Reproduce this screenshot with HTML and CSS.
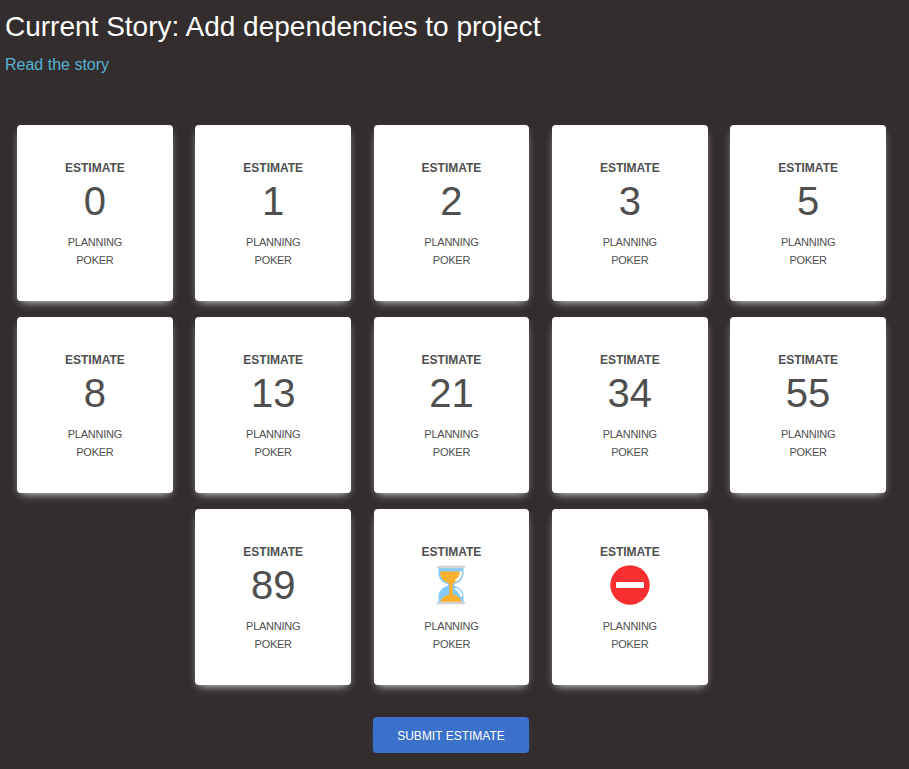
FILE: index.html
```html
<!DOCTYPE html>
<html lang="en">
<head>
<meta charset="utf-8">
<title>Planning Poker</title>
<link rel="stylesheet" href="styles.css">
</head>
<body>
<header class="story">
<h1 class="story-title">Current Story: Add dependencies to project</h1>
<a class="story-link">Read the story</a>
</header>
<main class="deck">
<div class="card"><b class="label">Estimate</b><span class="value">0</span><span class="foot">Planning<br>Poker</span></div>
<div class="card"><b class="label">Estimate</b><span class="value">1</span><span class="foot">Planning<br>Poker</span></div>
<div class="card"><b class="label">Estimate</b><span class="value">2</span><span class="foot">Planning<br>Poker</span></div>
<div class="card"><b class="label">Estimate</b><span class="value">3</span><span class="foot">Planning<br>Poker</span></div>
<div class="card"><b class="label">Estimate</b><span class="value">5</span><span class="foot">Planning<br>Poker</span></div>
<div class="card"><b class="label">Estimate</b><span class="value">8</span><span class="foot">Planning<br>Poker</span></div>
<div class="card"><b class="label">Estimate</b><span class="value">13</span><span class="foot">Planning<br>Poker</span></div>
<div class="card"><b class="label">Estimate</b><span class="value">21</span><span class="foot">Planning<br>Poker</span></div>
<div class="card"><b class="label">Estimate</b><span class="value">34</span><span class="foot">Planning<br>Poker</span></div>
<div class="card"><b class="label">Estimate</b><span class="value">55</span><span class="foot">Planning<br>Poker</span></div>
<div class="card"><b class="label">Estimate</b><span class="value">89</span><span class="foot">Planning<br>Poker</span></div>
<div class="card"><b class="label">Estimate</b><span class="value"><svg class="icon" viewBox="0 0 40 40" width="40" height="40">
<path d="M7.500 2h25v6c0 6-4 10-9.500 11.200v1.600C28.500 22 32.500 26 32.500 32v6h-25v-6c0-6 4-10 9.500-11.200v-1.600C11.500 18 7.500 14 7.500 8z" fill="#83cbff"/>
<path d="M9 6.500h22.500c0 6.500-4 10-8 11.200-1.300.4-1.800 1-1.800 2.300v9.500c3.300.5 7.800 2.500 8.800 7.500h-21c1-5 5.500-7 8.800-7.500V20c0-1.300-.5-1.900-1.800-2.300C12.500 16.500 9 13 9 6.500z" fill="#ffb02e"/>
<path d="M29.800 7.500c0 3.500-1.600 6-4.600 7.800M25.200 24c2.800 1.500 4.400 3.500 4.800 6.500" fill="none" stroke="#fff" stroke-width="2.400" stroke-linecap="round"/>
<path d="M6 .700h28v2.500H6zM6 36.700h28v2.500H6z" fill="#d3d3d3"/></svg></span><span class="foot">Planning<br>Poker</span></div>
<div class="card"><b class="label">Estimate</b><span class="value"><svg class="icon" viewBox="0 0 40 40" width="40" height="40"><circle cx="20" cy="20" r="19.700" fill="#f92f2f"/><rect x="6" y="17" width="28" height="6" rx="1.200" fill="#fff"/></svg></span><span class="foot">Planning<br>Poker</span></div>
</main>
<div class="actions"><button class="submit">Submit Estimate</button></div>
</body>
</html>
```
FILE: styles.css
```css
* { box-sizing: border-box; }
body {
  margin: 0;
  background: #332d2d;
  font-family: "Liberation Sans", Arial, sans-serif;
  color: #fff;
}
.story { padding: 10px 5px 0; height: 125px; }
.story-title { margin: 0 0 12px; font-size: 28px; font-weight: 400; line-height: 34px; }
.story-link { display: block; color: #54b4d3; font-size: 16px; line-height: 18px; }
.deck {
  width: 892px;
  margin-left: 5.500px;
  display: flex;
  flex-wrap: wrap;
  justify-content: center;
  row-gap: 16px;
}
.card {
  width: 155.800px;
  height: 176px;
  margin: 0 11.250px;
  padding-top: 34px;
  display: flex;
  flex-direction: column;
  align-items: center;
  background: #fff;
  border-radius: 4px;
  box-shadow: 0 4px 9px -4px #fbfbfb;
  color: #4f4f4f;
  text-align: center;
  text-transform: uppercase;
}
.label { font-size: 12px; line-height: 18px; }
.value { height: 48px; font-size: 40px; line-height: 48px; }
.icon { display: block; margin-top: 4px; }
.foot { margin-top: 8px; font-size: 11px; line-height: 18px; letter-spacing: -0.250px; }
.actions { display: flex; margin: 32px 0 0 373px; }
.submit {
  width: 156px;
  height: 36px;
  padding: 2px 0 0;
  border: 0;
  border-radius: 4px;
  background: #3b71ca;
  color: #fff;
  box-shadow: 0 4px 9px -4px #3b71ca;
  font: 500 12px/18px "Liberation Sans", Arial, sans-serif;
  text-transform: uppercase;
}
```
